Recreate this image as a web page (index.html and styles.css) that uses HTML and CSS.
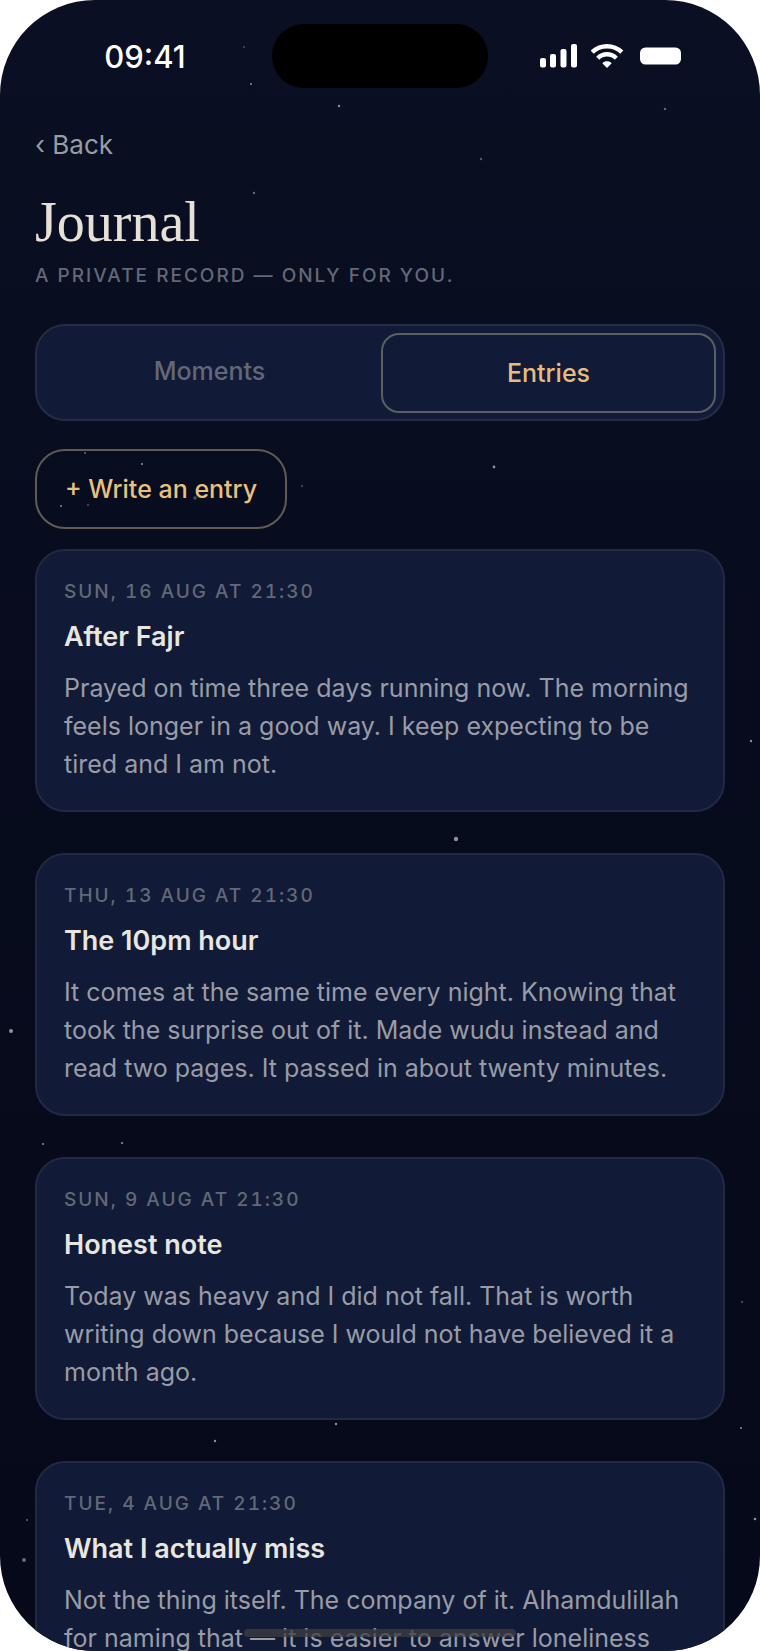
FILE: index.html
```html
<!DOCTYPE html>
<html lang="en">
<head>
    <meta charset="UTF-8">
    <meta name="viewport" content="width=device-width, initial-scale=1">
    <title>Journal</title>
    <link rel="stylesheet" href="styles.css">
</head>
<body>
<div class="phone">

    <!-- stars -->
    <svg class="stars" viewBox="0 0 760 1651" preserveAspectRatio="xMidYMin slice" aria-hidden="true">
        <g fill="#8d909c">
            <circle cx="244" cy="47" r="1" opacity=".5"/>
            <circle cx="251" cy="84" r="1"/>
            <circle cx="339" cy="106" r="1.2"/>
            <circle cx="665" cy="109" r="1.2" opacity=".7"/>
            <circle cx="481" cy="159" r="1.2" opacity=".6"/>
            <circle cx="254" cy="193" r="1.2" opacity=".7"/>
            <circle cx="494" cy="467" r="1.4"/>
            <circle cx="85" cy="453" r="1" opacity=".7"/>
            <circle cx="142" cy="464" r="1"/>
            <circle cx="61" cy="506" r="1"/>
            <circle cx="88" cy="505" r="1" opacity=".5"/>
            <circle cx="195" cy="498" r="1.8" opacity=".5"/>
            <circle cx="302" cy="486" r="1.2" opacity=".4"/>
            <circle cx="751" cy="741" r="1.2"/>
            <circle cx="456" cy="839" r="2.2"/>
            <circle cx="11" cy="1031" r="2"/>
            <circle cx="43" cy="1144" r="1"/>
            <circle cx="122" cy="1143" r="1.1"/>
            <circle cx="742" cy="1302" r="1" opacity=".6"/>
            <circle cx="336" cy="1424" r="1.2"/>
            <circle cx="215" cy="1441" r="1.2"/>
            <circle cx="741" cy="1428" r="1"/>
            <circle cx="27" cy="1520" r="1" opacity=".7"/>
            <circle cx="755" cy="1519" r="1.3"/>
            <circle cx="24" cy="1560" r="2" opacity=".7"/>
        </g>
    </svg>

    <header class="status">
        <span class="time">09:41</span>
        <span class="island"></span>
        <span class="signals">
            <svg width="38" height="24" viewBox="0 0 38 24" fill="#fff" aria-hidden="true">
                <rect x="0" y="14" width="6" height="9.500" rx="2"/>
                <rect x="10" y="10" width="6" height="13.500" rx="2"/>
                <rect x="20.500" y="5" width="6" height="18.500" rx="2"/>
                <rect x="31" y="0" width="6" height="23.500" rx="2"/>
            </svg>
            <svg width="36" height="24" viewBox="1 0 36 24" aria-hidden="true">
                <path d="M2.200 8.200C10.500 0.200 23.500 0.200 31.800 8.200" fill="none" stroke="#fff" stroke-width="4.400"/>
                <path d="M7.700 14.200C13 9 21 9 26.300 14.200" fill="none" stroke="#fff" stroke-width="4.400"/>
                <path d="M17 24L12.300 19.200C15 16.700 19 16.700 21.700 19.200Z" fill="#fff"/>
            </svg>
            <svg width="42" height="24" viewBox="0 0 42 24" aria-hidden="true">
                <rect x="0" y="3.500" width="41" height="17" rx="5.500" fill="#fff"/>
            </svg>
        </span>
    </header>

    <main class="page">
        <a class="back" href="#">‹ Back</a>
        <h1>Journal</h1>
        <p class="label sub">A private record — only for you.</p>

        <div class="tabs">
            <button class="tab" type="button">Moments</button>
            <button class="tab active" type="button">Entries</button>
        </div>

        <button class="write" type="button">+ Write an entry</button>

        <div class="entries">
            <article class="card">
                <p class="label">Sun, 16 Aug at 21:30</p>
                <h2>After Fajr</h2>
                <p class="text">Prayed on time three days running now. The morning feels longer in a good way. I keep expecting to be tired and I am not.</p>
            </article>
            <article class="card">
                <p class="label">Thu, 13 Aug at 21:30</p>
                <h2>The 10pm hour</h2>
                <p class="text">It comes at the same time every night. Knowing that took the surprise out of it. Made wudu instead and read two pages. It passed in about twenty minutes.</p>
            </article>
            <article class="card">
                <p class="label">Sun, 9 Aug at 21:30</p>
                <h2>Honest note</h2>
                <p class="text">Today was heavy and I did not fall. That is worth writing down because I would not have believed it a month ago.</p>
            </article>
            <article class="card">
                <p class="label">Tue, 4 Aug at 21:30</p>
                <h2>What I actually miss</h2>
                <p class="text">Not the thing itself. The company of it. Alhamdulillah for naming that — it is easier to answer loneliness</p>
            </article>
        </div>
    </main>

    <div class="home"></div>
</div>
</body>
</html>
```
FILE: styles.css
```css
*{box-sizing:border-box;}

body{margin:0;background:#fff;font-family:Inter,"Liberation Sans",sans-serif;}

h1,h2,p{margin:0;}

button{font:inherit;background:none;border:0;padding:0;cursor:pointer;}

.phone{position:relative;height:100vh;overflow:hidden;border-radius:95px;
    background:linear-gradient(#0a0f23,#070c1e 35%,#060919);}

.stars{position:absolute;top:0;left:0;width:100%;height:100%;}

/* status bar */
.status{position:relative;display:grid;grid-template-columns:1fr 216px 1fr;align-items:center;
    padding:24px 18px 0;}

.time{color:#fff;font-size:31px;font-weight:500;text-align:center;}

.island{height:64px;border-radius:32px;background:#000;}

.signals{display:flex;justify-content:center;align-items:center;gap:13px;padding-right:8px;}

.page{position:relative;padding:39px 35px 0;}

.back{display:block;width:max-content;color:#9b9ca1;font-size:26px;line-height:36px;text-decoration:none;}

h1{margin-top:27px;color:#e6e0d6;font-family:Georgia,"Liberation Serif",serif;
    font-size:56px;font-weight:400;line-height:64px;}

.label{color:#636878;font-size:19px;font-weight:500;line-height:24px;letter-spacing:2px;text-transform:uppercase;
    font-variant-numeric:tabular-nums;}

.sub{margin-top:10px;}

/* tabs */
.tabs{display:flex;align-items:flex-start;gap:6px;margin-top:36px;padding:7px;height:97px;
    border:2px solid #252c47;border-radius:30px;background:#111a36;}

.tab{flex:1;height:76px;color:#636878;font-size:25px;font-weight:500;}

.tab.active{height:80px;border:2px solid #5b5f60;border-radius:18px;color:#e5bd80;}

.write{display:block;margin-top:28px;height:80px;padding:0 28px;border:2px solid #5e5c53;
    border-radius:30px;color:#e9c07e;font-size:25px;font-weight:500;}

/* entries */
.entries{display:flex;flex-direction:column;gap:41px;margin-top:20px;}

.card{padding:29px 27px 27px;border:2px solid #222943;border-radius:30px;background:#111a36;}

.card h2{margin-top:16px;color:#e9e6df;font-size:27px;font-weight:600;line-height:34px;}

.card .text{margin-top:15px;color:#999ca6;font-size:25px;line-height:38px;}

.home{position:absolute;left:0;right:0;bottom:14px;width:272px;height:8px;margin:0 auto;
    border-radius:4px;background:rgba(62,62,66,.75);}
```
